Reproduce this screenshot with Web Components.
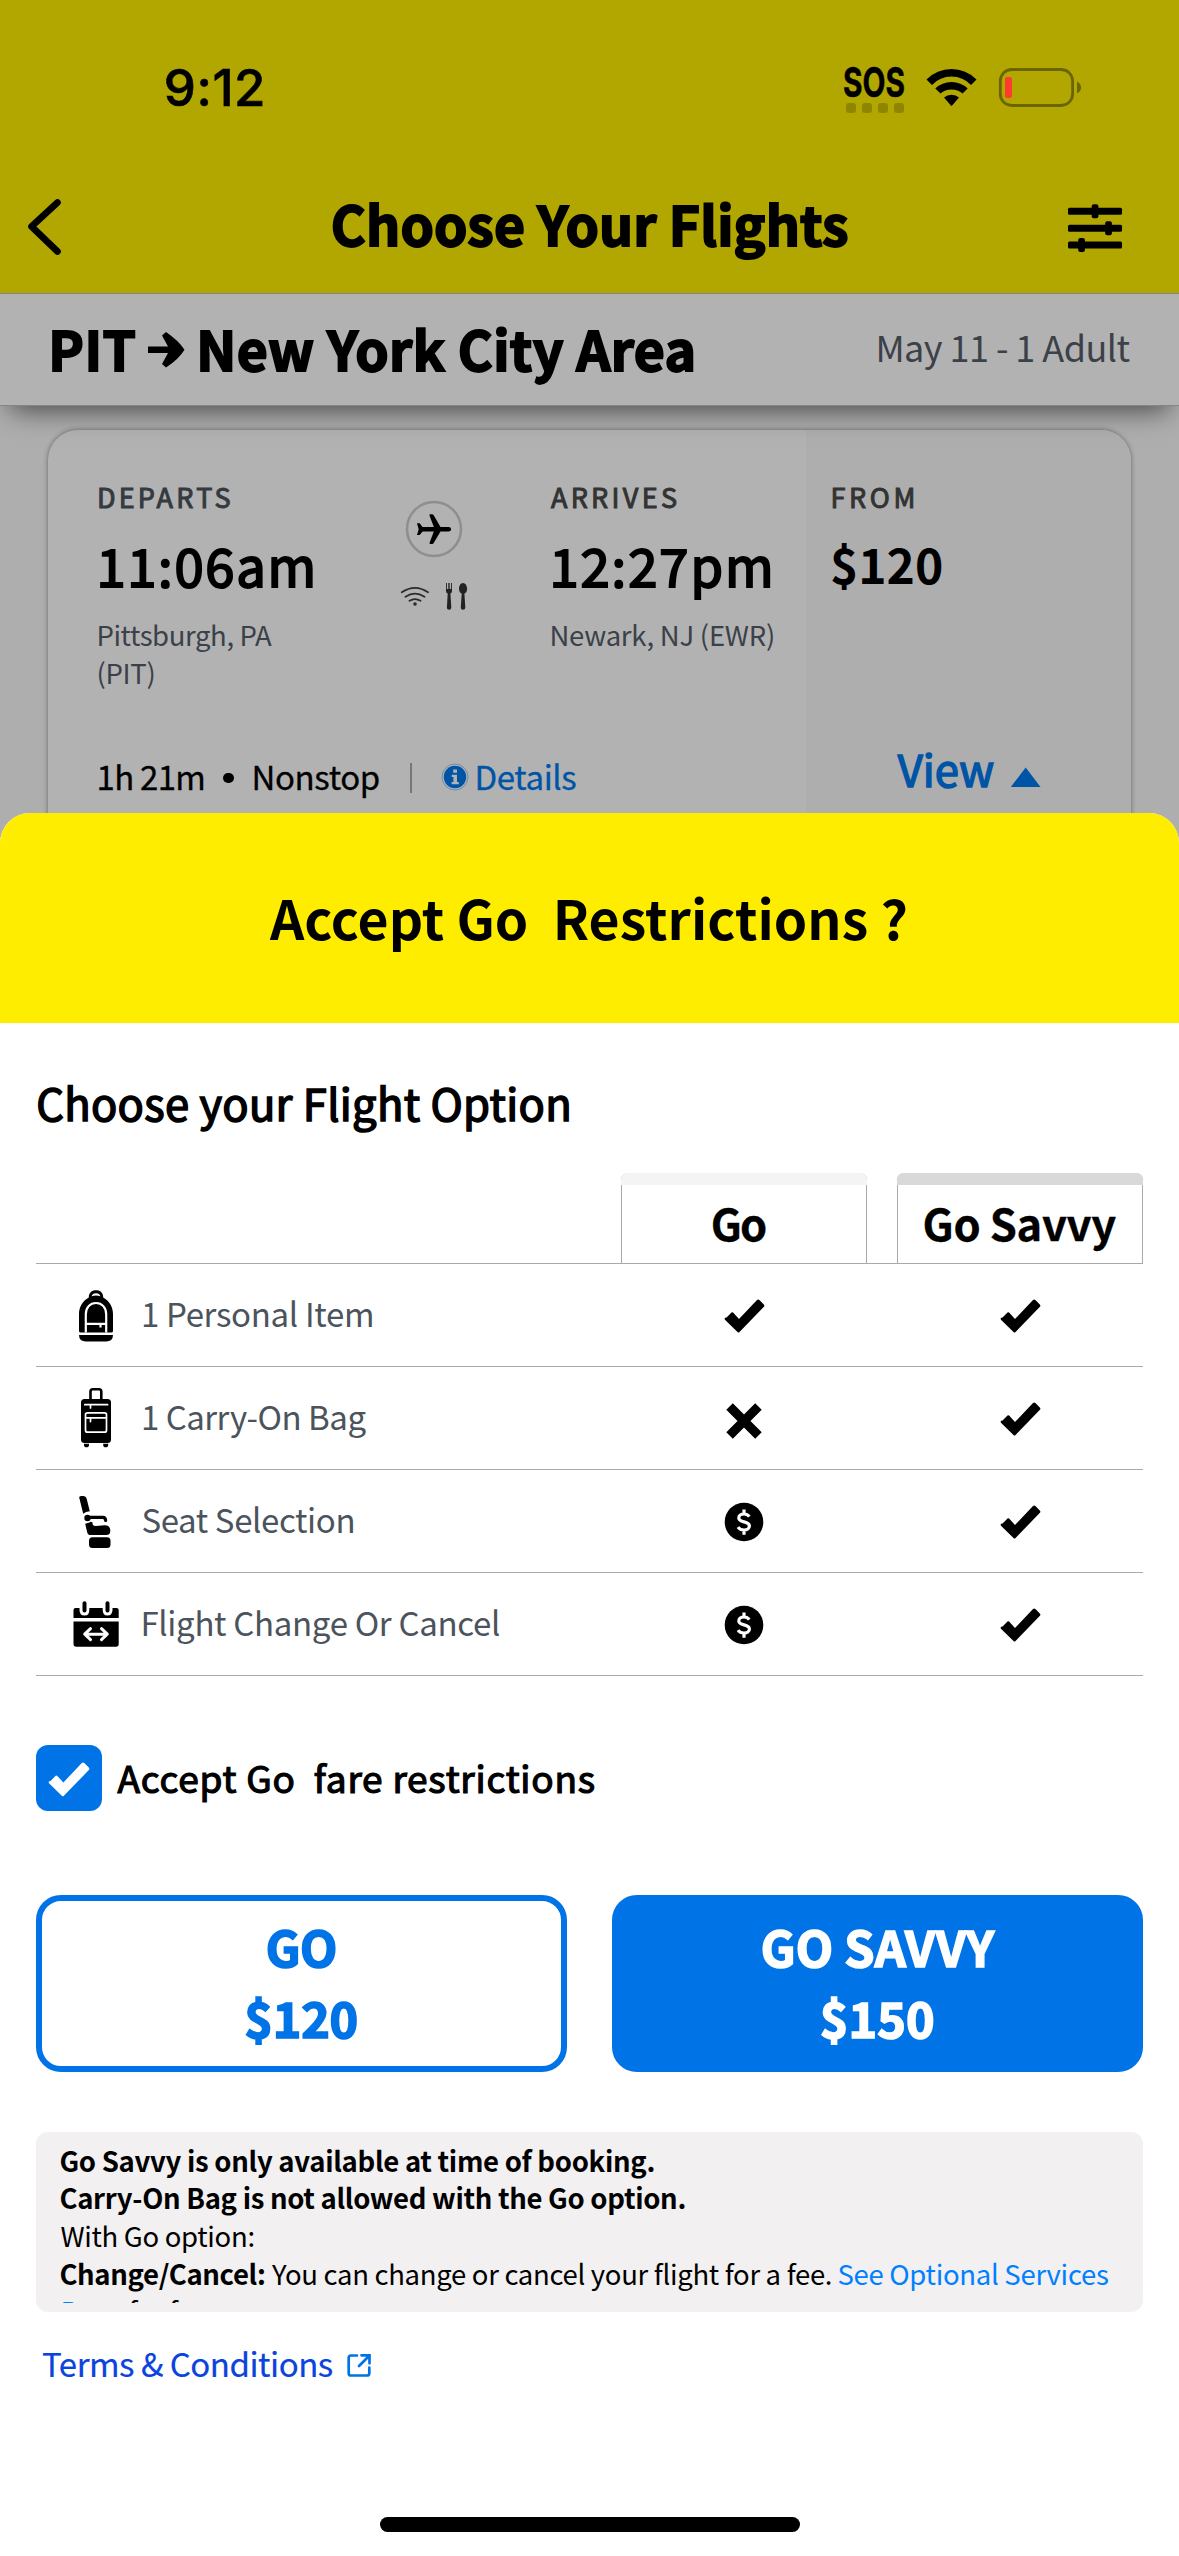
<!DOCTYPE html>
<html lang="en">
<head>
<meta charset="utf-8">
<title>Choose Your Flights</title>
<style>
body{margin:0;background:#fff;font-family:"Noto Sans CJK JP","Noto Sans",sans-serif;color:#000}
</style>
</head>
<body>
<flights-page></flights-page>
<script>
/* Text set to a measured ink width. s: size, b: baseline from the row top,
   w: ink width, g: gap before, f: weight, k: extra stem weight,
   squeeze: condense the glyphs instead of tracking them. */
const canvas = document.createElement('canvas').getContext('2d');
class FitText extends HTMLElement {
  connectedCallback() {
    const n = (k, d) => +(this.getAttribute(k) ?? d);
    const s = n('s', 32), inter = this.hasAttribute('inter');
    const fam = inter ? 'Inter, sans-serif' : '"Noto Sans CJK JP","Noto Sans",sans-serif';
    const asc = inter ? 0.864 : 0.918, f = n('f', 400), w = n('w', 100), k = n('k', 0);
    const root = this.attachShadow({ mode: 'open' });
    root.innerHTML = `<style>
      :host{display:block;flex:none;height:${s}px;width:${w}px;margin-left:${n('g', 0)}px;
        margin-top:${n('b', 0) - asc * s}px;font:${f} ${s}px/1 ${fam};white-space:pre;color:${this.getAttribute('c') || 'inherit'}}
      span{display:inline-block;-webkit-text-stroke:${k}px currentColor;transform-origin:0 0}
    </style><span><slot></slot></span>`;
    const t = this.textContent, span = root.querySelector('span');
    canvas.font = `${f} ${s}px ${fam}`;
    const m = canvas.measureText(t);
    const ink = m.actualBoundingBoxLeft + m.actualBoundingBoxRight + k;
    if (this.hasAttribute('squeeze')) span.style.transform = `scaleX(${w / ink})`;
    else span.style.letterSpacing = (w - ink) / (t.length - 1) + 'px';
    span.style.marginLeft = m.actualBoundingBoxLeft + k / 2 + .4 + 'px';
  }
}
customElements.define('fit-text', FitText);

const CHECK = 'M2.5 18.5 7.5 13.5Q8.3 12.8 9.1 13.6L15 20 33 1Q34.2-.2 35.4 1L39.8 5.4Q41 6.6 39.9 7.8L15.5 33Q14.5 34 13.5 33L1.2 21Q0 19.8 1.2 18.8Z';
const DOLLAR_COIN = '<circle cx="20" cy="20" r="19.3"/><path d="M25.3 14.7C24.2 13 22.4 12 20 12c-3 0-5.2 1.5-5.2 4 0 5.3 10.6 2.5 10.6 8 0 2.6-2.3 4.1-5.4 4.1-2.6 0-4.7-1-6-2.9M20 7.4v5M20 27.7v5" fill="none" stroke="#fff" stroke-width="3.2"/>';
const ICONS = {
  back: ['25 195 40 64', '<path d="M57.5 202.500 31.500 226.500 57.500 251.500" fill="none" stroke="#000" stroke-width="6.6" stroke-linecap="round" stroke-linejoin="round"/>'],
  filter: ['1066 202 58 52', '<g><rect x="1068" y="207.800" width="54" height="7" rx="1.500"/><rect x="1068" y="224.700" width="54" height="7" rx="1.500"/><rect x="1068" y="241.600" width="54" height="7" rx="1.500"/><rect x="1091.700" y="204.300" width="6.700" height="14" rx="2"/><rect x="1105.200" y="221.200" width="6.700" height="14" rx="2"/><rect x="1078.200" y="238.100" width="6.700" height="14" rx="2"/></g>'],
  dots: ['844 102 62 12', '<g fill="#8e8500"><rect x="846" y="103" width="10" height="10" rx="3"/><rect x="862" y="103" width="10" height="10" rx="3"/><rect x="878" y="103" width="10" height="10" rx="3"/><rect x="894" y="103" width="10" height="10" rx="3"/></g>'],
  signal: ['924 66 56 42', '<path d="M926.500 79.500Q937 69 951.500 69T976.500 79.500L971 85Q963 76.500 951.500 76.500T932 85ZM935.300 88.500Q942 82 951.500 82T967.700 88.500L962.500 93.500Q958 89.500 951.500 89.500T940.500 93.500ZM944 97.500Q947 94.800 951.500 94.800T959 97.500L952.300 105.300Q951.500 106.300 950.700 105.300Z"/>'],
  battery: ['998 66 86 44', '<rect x="1000.300" y="69.500" width="72.300" height="36" rx="11.500" fill="none" stroke="#6b6400" stroke-width="2.800"/><path d="M1077 81.500Q1081 83.500 1081 87.500T1077 93.300Z" fill="#6b6400"/><rect x="1005" y="77" width="7" height="21" rx="2.300" fill="#ff3b30"/>'],
  plane: ['404 499 60 60', '<circle cx="434" cy="529" r="27" fill="none" stroke="#8f8f8f" stroke-width="2.600"/><path d="M417 523.300h2.600l3 3.700h11.200L429.500 515.500q-.4-1.300 1-1.300h1.600q1 0 1.600 1L440.500 527h8q2.600 0 2.600 2.200t-2.600 2.200h-8L433.700 543q-.5 1-1.600 1h-1.500q-1.400 0-1-1.300L433.800 531.400h-11.200l-3 3.500H417l1.700-5.700Z"/>'],
  wifi: ['399 585 32 24', '<g fill="none" stroke="#2b2b2b" stroke-width="1.800" stroke-linecap="round"><path d="M401.800 592.300Q415 583.500 428 592.300M405.500 596.800Q415 590.500 424.500 596.800M409.500 600.800Q415 597.300 420.500 600.800"/></g><circle cx="415" cy="604" r="1.800" fill="#2b2b2b"/>'],
  food: ['444 581 26 30', '<g fill="#222"><path d="M446 583h.9v6h1.400v-6h1.400v6h1.400v-6h.9v8.300q0 1.700-1.600 2.100L451.300 607.500q0 2.200-2.300 2.200t-2.100-2.200L447.700 593.400q-1.700-.4-1.700-2.100Z"/><path d="M463 583c2.500 0 4.100 2.800 4.100 5.800s-1.600 4.400-2.700 4.900L465.300 607.500q0 2.200-2.300 2.200t-2.200-2.200L461.700 593.700c-1.100-.5-2.700-1.900-2.700-4.900s1.500-5.800 4-5.800Z"/></g>'],
  info: ['441 763 28 28', '<circle cx="455" cy="777" r="11.200" fill="#0054a6"/><circle cx="455" cy="777" r="13" fill="none" stroke="#4a7cae" stroke-width=".7"/><path d="M453.200 769.600h3.800v3.200h-3.800ZM451.700 774.700h5.300v7.300h1.800v2.200h-7.200v-2.200h1.800v-5h-1.700Z" fill="#b2b2b2"/>'],
  up: ['1010 766 32 22', '<path d="M1025.700 767.500 1040.500 787H1010.800Z" fill="#0054a6"/>'],
  backpack: ['73 1286 46 60', '<path d="M88.800 1297.500C88.800 1293 91.500 1290.300 96 1290.300s7.200 2.700 7.200 7.200C109.500 1301 113 1307 113 1314V1331q0 1.500-1.500 1.500H80.500Q79 1332.500 79 1331V1314C79 1307 82.500 1301 88.800 1297.500ZM79 1335H113Q113 1341.500 106 1341.500H86Q79 1341.500 79 1335Z"/><path d="M91.600 1296.300Q92.500 1293.300 96 1293.300T100.400 1296.300Q96 1294.900 91.600 1296.300Z" fill="#fff"/><path d="M85.800 1332.500V1314.500C85.800 1307.500 90 1303 96 1303s10.200 4.500 10.200 11.500V1332.500M86 1323.800H106M100.500 1324v3.500" fill="none" stroke="#fff" stroke-width="2.200"/>'],
  suitcase: ['73 1384 46 66', '<path d="M90.500 1399V1391.500Q90.500 1389.200 92.800 1389.200H99Q101.300 1389.200 101.300 1391.500V1399" fill="none" stroke="#000" stroke-width="2.600"/><rect x="81" y="1399" width="30" height="44" rx="3.500"/><path d="M84 1443.700h5v1q0 2.600-2.500 2.600t-2.500-2.600ZM103.200 1443.700h5v1q0 2.600-2.500 2.600t-2.500-2.600Z"/><path d="M84.800 1404.700H107.600M90.500 1405v3M87.500 1412.800H104.500Q106.500 1412.800 106.500 1414.800V1430.200Q106.500 1432.200 104.500 1432.200H87.500Q85.500 1432.200 85.500 1430.200V1414.800Q85.500 1412.800 87.500 1412.800ZM86 1417.900H106M90.500 1418v3.600" fill="none" stroke="#fff" stroke-width="1.700" stroke-linecap="round"/>'],
  seat: ['73 1493 46 58', '<path d="M79.200 1497.500Q79.200 1496 81 1496H83.500Q86 1496 86.600 1498.500L89.800 1511.300Q85.500 1511.600 83.200 1513.800Z"/><circle cx="87.500" cy="1518" r="3.200"/><path d="M87 1517.400H103Q105.400 1517.400 105.600 1520.500" fill="none" stroke="#000" stroke-width="3.200" stroke-linecap="round"/><path d="M85.200 1523.800 89.500 1522.600 90.500 1521.700 92.500 1522.300Q92 1526.300 96 1526L104.500 1525.200Q110.300 1525.200 110.300 1530.500T105 1535H90.500Q87.700 1535 87.200 1532.200Z"/><rect x="89" y="1537.300" width="21.500" height="10.700" rx="3.500"/>'],
  calendar: ['71 1597 50 54', '<path d="M73.500 1618V1610Q73.500 1608 75.500 1608H79.500V1610Q79.500 1615.500 84.500 1615.500T89.300 1610V1608H102.700V1610Q102.700 1615.500 107.500 1615.500T112.500 1610V1608H116.500Q118.700 1608 118.700 1610V1618ZM73.500 1621.500H118.700V1644Q118.700 1646.800 116 1646.800H76.500Q73.500 1646.800 73.500 1644Z"/><path d="M84.500 1603.300V1610.500M107.500 1603.300V1610.500" stroke="#000" stroke-width="4" stroke-linecap="round"/><path d="M85 1634.200H107M90.500 1628.700 84.700 1634.200 90.500 1639.700M101.500 1628.700 107.300 1634.200 101.500 1639.700" fill="none" stroke="#fff" stroke-width="3" stroke-linecap="round" stroke-linejoin="round"/>'],
  check: ['0 0 41 34', `<path d="${CHECK}"/>`],
  tick: ['0 0 41 34', `<path d="${CHECK}" fill="#fff"/>`],
  cross: ['0 0 36 36', '<path d="M6.800 6.800 29.200 29.200M29.200 6.800 6.800 29.200" stroke="#000" stroke-width="9.200" stroke-linecap="square" stroke-linejoin="round"/>'],
  dollar: ['0 0 40 40', DOLLAR_COIN],
  external: ['345 2351 28 28', '<path d="M357 2355.500H351Q348.700 2355.500 348.700 2357.800V2373.200Q348.700 2375.500 351 2375.500H367Q369.300 2375.500 369.300 2373.200V2367.500M359 2366 368.500 2356.500M361.500 2355.300H369.500V2363.300" fill="none" stroke="#0073e6" stroke-width="2.700" stroke-linecap="round"/>'],
};
/* n: name, g: gap before, t: top inside the row, w: drawn width. */
class GIcon extends HTMLElement {
  connectedCallback() {
    const [box, art] = ICONS[this.getAttribute('n')];
    const [, , bw, bh] = box.split(' ').map(Number);
    const w = +(this.getAttribute('w') ?? bw), h = bh * w / bw;
    this.attachShadow({ mode: 'open' }).innerHTML = `<style>
      :host{display:block;flex:none;width:${w}px;height:${h}px;margin-left:${this.getAttribute('g') || 0}px;margin-top:${this.getAttribute('t') || 0}px}
      svg{display:block}</style>
      <svg width="${w}" height="${h}" viewBox="${box}">${art}</svg>`;
  }
}
customElements.define('g-icon', GIcon);

function define(name, html) {
  customElements.define(name, class extends HTMLElement {
    constructor() {
      super();
      this.attachShadow({ mode: 'open' }).innerHTML =
        '<style>:host{display:flex;box-sizing:border-box}.row{display:flex;align-items:flex-start}.col{display:flex;flex-direction:column}*{box-sizing:border-box}</style>' + html;
    }
  });
}

define('status-bar', `<style>:host{height:150px;align-items:flex-start}</style>
  <fit-text inter s="51" f="500" k=".6" b="106" w="98" g="165">9:12</fit-text>
  <div class="col" style="margin-left:581px;height:114px">
    <fit-text inter squeeze s="41" f="700" b="97" w="61" k=".5" g="-1">SOS</fit-text>
    <g-icon n="dots" t="-.600"></g-icon>
  </div>
  <g-icon n="signal" t="66" g="18"></g-icon>
  <g-icon n="battery" t="66" g="18"></g-icon>`);

define('nav-bar', `<style>:host{height:143px;align-items:flex-start}</style>
  <g-icon n="back" g="25" t="45"></g-icon>
  <fit-text s="53.500" f="700" k="1.900" b="95" w="516" g="266.500">Choose Your Flights</fit-text>
  <g-icon n="filter" g="218.500" t="52"></g-icon>`);

define('route-bar', `<style>:host{height:113px;align-items:flex-start;background:#b2b2b2;border-top:1px solid #858585;border-bottom:1px solid #858585;box-shadow:0 14px 26px -10px rgba(0,0,0,.6);position:relative;clip-path:inset(0 0 -70px 0)}</style>
  <fit-text s="53.500" f="700" k="1.900" b="76" w="84" g="51">PIT</fit-text>
  <svg style="margin:37px 0 0 13px;flex:none" width="37" height="42" viewBox="148 330 37 42"><path d="M148 345.500h20l-6-11 4-3.500q13 9 18.500 17.700Q179 358 166 366.500l-4-3.500 6-11h-20Z"/></svg>
  <fit-text s="53.500" f="700" k="1.900" b="76" w="494" g="14">New York City Area</fit-text>
  <fit-text s="36" b="67.500" w="252" g="185" c="#3b4148">May 11 - 1 Adult</fit-text>`);

define('flight-card', `<style>
  :host{margin:24px 48px 0;height:430px;border-radius:30px;overflow:hidden;background:#b2b2b2;box-shadow:0 0 5px rgba(0,0,0,.42)}
  .main{width:758px;flex-direction:column}
  .fare{flex:1;background:#aeaeae}
  .stack{display:flex;flex-direction:column;flex:none}
  .sep{width:1.500px;height:30px;background:#777;margin:33px 0 0 31.500px;flex:none}
  .dot{width:10.500px;height:10.500px;border-radius:50%;background:#000;margin:42.500px 0 0 20px;flex:none}
  </style>
  <div class="main" style="display:flex">
    <div class="row" style="height:300px">
      <div class="stack" style="width:306px;padding-left:50px">
        <fit-text s="27" k="1" b="78" w="131.500" c="#343a40">DEPARTS</fit-text>
        <fit-text s="52.500" k="2" b="75.500" w="214" g="1">11:06am</fit-text>
        <fit-text s="27.500" b="56" w="173.500" c="#3b4148">Pittsburgh, PA</fit-text>
        <fit-text s="27.500" b="36" w="55" c="#3b4148">(PIT)</fit-text>
      </div>
      <div class="stack" style="width:196px">
        <g-icon n="plane" g="50" t="69"></g-icon>
        <div class="row"><g-icon n="wifi" g="45" t="26"></g-icon><g-icon n="food" g="13" t="22"></g-icon></div>
      </div>
      <div class="stack">
        <fit-text s="27" k="1" b="78" w="126" c="#333">ARRIVES</fit-text>
        <fit-text s="52.500" k="2" b="75.500" w="218.500" g="2">12:27pm</fit-text>
        <fit-text s="27.500" b="56" w="221.500" g="1" c="#3b4148">Newark, NJ (EWR)</fit-text>
      </div>
    </div>
    <div class="row">
      <fit-text s="33" b="60" w="105" g="50" k=".3">1h 21m</fit-text>
      <span class="dot"></span>
      <fit-text s="33" b="60" w="124.500" g="20.500" k=".3">Nonstop</fit-text>
      <span class="sep"></span>
      <g-icon n="info" g="29" t="33"></g-icon>
      <fit-text s="33" b="60" w="99" g="8.500" k=".3" c="#0054a6">Details</fit-text>
    </div>
  </div>
  <div class="fare col">
    <fit-text s="27" k="1" b="78" w="82" g="25.500" c="#333">FROM</fit-text>
    <fit-text s="48" f="700" b="72.500" w="110" g="25.500">$120</fit-text>
    <div class="row">
      <fit-text s="43.500" k="1.500" b="200" w="97" g="90.500" c="#0054a6">View</fit-text>
      <g-icon n="up" g="16" t="179"></g-icon>
    </div>
  </div>`);

define('sheet-header', `<style>:host{height:210px;background:#ffed00;border-radius:30px 30px 0 0;align-items:flex-start;justify-content:center}</style>
  <fit-text s="53.500" f="700" b="126" w="636.500" g="-5.500">Accept Go  Restrictions ?</fit-text>`);

customElements.define('fare-tab', class extends HTMLElement {
  constructor() {
    super();
    this.attachShadow({ mode: 'open' }).innerHTML = `<style>
      :host{display:flex;flex:none;justify-content:center;box-sizing:border-box;width:246px;height:90px;border:solid #aaa;border-width:0 1px 0 1.500px;
        background:linear-gradient(var(--bar) 12px,#fff 12px);border-radius:7px 7px 0 0;align-items:flex-start;position:relative}
      :host::before{content:"";position:absolute;inset:0 -1px auto -1.500px;height:12px;background:var(--bar);border-radius:7px 7px 0 0}
    </style><slot></slot>`;
  }
});

customElements.define('perk-row', class extends HTMLElement {
  constructor() {
    super();
    this.attachShadow({ mode: 'open' }).innerHTML = `<style>
      :host{display:flex;height:103px;align-items:flex-start;box-sizing:border-box;border-bottom:1.400px solid #aaa}
      .label{display:flex;width:585px;align-items:flex-start}
      .cell{display:flex;width:246px;height:104px;align-items:center;justify-content:center}
      .cell+.cell{margin-left:30px}
      .pic{display:flex;width:106px;flex:none}
    </style>
    <div class="label"><div class="pic"><slot name="icon"></slot></div><slot></slot></div>
    <div class="cell"><slot name="go"></slot></div><div class="cell"><slot name="savvy"></slot></div>`;
  }
});

define('fare-table', `<style>:host{flex-direction:column;margin:0 36px}
  .tabs{height:91px;border-bottom:1.400px solid #aaa;gap:30px;padding-left:585px}</style>
  <div class="row tabs">
    <fare-tab style="--bar:#f4f4f4"><fit-text s="43.500" f="700" k=".3" b="68" w="53.500" g="-10">Go</fit-text></fare-tab>
    <fare-tab style="--bar:#d9d9d9"><fit-text s="43.500" f="700" k=".3" b="68" w="192" g="0">Go Savvy</fit-text></fare-tab>
  </div>
  <perk-row><g-icon slot="icon" n="backpack" g="37" t="22"></g-icon><fit-text s="33" b="63.500" w="229" g=".500" c="#4b535c">1 Personal Item</fit-text>
    <g-icon slot="go" n="check"></g-icon><g-icon slot="savvy" n="check"></g-icon></perk-row>
  <perk-row><g-icon slot="icon" n="suitcase" g="37" t="17"></g-icon><fit-text s="33" b="63.500" w="223.500" g=".500" c="#4b535c">1 Carry-On Bag</fit-text>
    <g-icon slot="go" n="cross" t="4"></g-icon><g-icon slot="savvy" n="check"></g-icon></perk-row>
  <perk-row><g-icon slot="icon" n="seat" g="37" t="23"></g-icon><fit-text s="33" b="63.500" w="211" c="#4b535c">Seat Selection</fit-text>
    <g-icon slot="go" n="dollar"></g-icon><g-icon slot="savvy" n="check"></g-icon></perk-row>
  <perk-row><g-icon slot="icon" n="calendar" g="35" t="24"></g-icon><fit-text s="33" b="63.500" w="355.500" g="1" c="#4b535c">Flight Change Or Cancel</fit-text>
    <g-icon slot="go" n="dollar"></g-icon><g-icon slot="savvy" n="check"></g-icon></perk-row>`);

define('accept-box', `<style>:host{margin:69px 36px 0;align-items:flex-start;height:66px}
  .box{width:66px;height:66px;border-radius:12px;background:#0073e6}</style>
  <div class="row box"><g-icon n="tick" g="12" t="17" w="42"></g-icon></div>
  <fit-text s="37" k="1.200" b="47.500" w="477.500" g="14.500">Accept Go  fare restrictions</fit-text>`);

customElements.define('fare-button', class extends HTMLElement {
  constructor() {
    super();
    this.attachShadow({ mode: 'open' }).innerHTML = `<style>
      :host{display:flex;flex-direction:column;align-items:center;flex:1;box-sizing:border-box;height:177px;border:6px solid #0073e6;border-radius:25px;color:#0073e6}
      :host([solid]){background:#0073e6;color:#fff}</style><slot></slot>`;
  }
});
define('fare-buttons', `<style>:host{margin:84px 36px 0;gap:45px}</style>
  <fare-button><fit-text s="48.500" f="700" k="1.700" b="66" w="69" g="-1">GO</fit-text><fit-text s="48.500" f="700" k="1.700" b="66.500" w="112" g="-1">$120</fit-text></fare-button>
  <fare-button solid><fit-text s="48.500" f="700" k="1.700" b="66" w="234" g="2">GO SAVVY</fit-text><fit-text s="48.500" f="700" k="1.700" b="66.500" w="113" g="-1">$150</fit-text></fare-button>`);

define('fare-notes', `<style>:host{margin:60px 36px 0;height:180px;background:#f2f0f1;border-radius:12px;padding:0 24px 9px}
  .scroll{flex:1;overflow:hidden;align-items:flex-start}.row{height:37.800px;flex:none}</style>
  <div class="col scroll" style="align-items:flex-start">
    <div class="row" style="height:39.500px"><fit-text s="27.500" f="700" b="40" w="593">Go Savvy is only available at time of booking.</fit-text></div>
    <div class="row"><fit-text s="27.500" f="700" b="38.200" w="624">Carry-On Bag is not allowed with the Go option.</fit-text></div>
    <div class="row"><fit-text s="27.500" b="37.800" w="193">With Go option:</fit-text></div>
    <div class="row"><fit-text s="27.500" f="700" b="37.800" w="203.500">Change/Cancel:</fit-text><fit-text s="27.500" b="37.800" w="560" g="7">You can change or cancel your flight for a fee.</fit-text><fit-text s="27.500" b="37.800" w="269.500" g="7.500" c="#0080ff">See Optional Services</fit-text></div>
    <div class="row"><fit-text s="27.500" b="37.800" w="58" g="2" c="#0080ff">Page</fit-text><fit-text s="27.500" b="37.800" w="97" g="8">for fees.</fit-text></div>
  </div>`);

define('terms-link', `<style>:host{margin:36px 0 0 43px;align-items:flex-start;color:#0a43dd}</style>
  <fit-text s="33" b="29.500" w="290" k=".2" g="-.500">Terms &amp; Conditions</fit-text><g-icon n="external" g="12" t="3"></g-icon>`);

define('fare-sheet', `<style>:host{flex-direction:column;background:#fff;border-radius:30px 30px 0 0;height:1743px}
  .home{width:420px;height:15px;border-radius:8px;background:#000;margin:auto auto 24px}</style>
  <sheet-header></sheet-header>
  <div class="row" style="height:150px"><fit-text s="43.500" k="1.500" b="97.500" w="531.500" g="37">Choose your Flight Option</fit-text></div>
  <fare-table></fare-table>
  <accept-box></accept-box>
  <fare-buttons></fare-buttons>
  <fare-notes></fare-notes>
  <terms-link></terms-link>
  <div class="home"></div>`);

define('flights-page', `<style>:host{flex-direction:column;width:1179px;height:2556px;background:#aeaeae;overflow:hidden}
  .top{background:#b2a600;height:293px}
  fare-sheet{position:absolute;top:813px;left:0;width:1179px}</style>
  <div class="col top"><status-bar></status-bar><nav-bar></nav-bar></div>
  <route-bar></route-bar>
  <flight-card></flight-card>
  <fare-sheet></fare-sheet>`);
</script>
</body>
</html>
